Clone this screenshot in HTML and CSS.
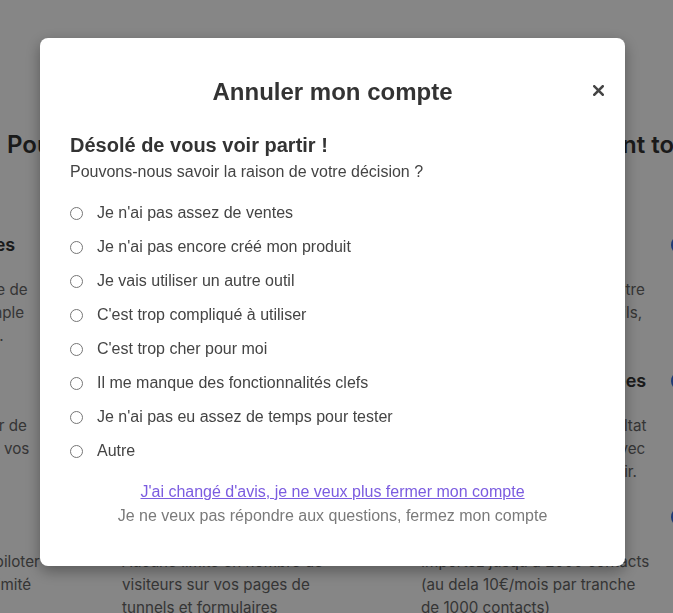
FILE: index.html
```html
<!DOCTYPE html>
<html lang="fr">
<head>
<meta charset="utf-8">
<title>Annuler mon compte</title>
<link rel="stylesheet" href="styles.css">
</head>
<body>
<div class="page">
  <h2 class="page-title">Pour démarrer sereinement, vous profitez gratuitement tout de suite de :</h2>
  <div class="features">
    <div class="feature"><span class="ficon"></span><div class="ftext"><h3>Gestion de vos ventes</h3><p>Créez les pages de vente de<br>capture de sorte très simple<br>rapide, sans aucun code.</p></div></div>
    <div class="feature"><span class="ficon"></span><div class="ftext"><h3>Formulaires</h3><p>Collectez des prospects avec des<br>formulaires personnalisés et<br>intégrez-les partout.</p></div></div>
    <div class="feature"><span class="ficon"></span><div class="ftext"><h3>Emails illimités</h3><p>Envoyez une newsletter à votre<br>sans limite d'envoi, vos emails,<br>et séquences</p></div></div>
    <div class="feature"><span class="ficon"></span><div class="ftext"><h3>Nom de domaine</h3><p>Connectez votre propre nom de<br>domaine à vos pages.</p></div></div>

    <div class="feature"><span class="ficon"></span><div class="ftext"><h3>Blog</h3><p>Un blog inclus pour créer de<br>articles, puis attirez ainsi vos<br>visiteurs</p></div></div>
    <div class="feature"><span class="ficon"></span><div class="ftext"><h3>Espace membre</h3><p>Hébergez vos formations en ligne<br>et vos contenus privés.</p></div></div>
    <div class="feature"><span class="ficon"></span><div class="ftext"><h3>Les statistiques détaillées</h3><p>Suivez chaque vente et résultat<br>des campagnes en direct, avec<br>des données claires pour agir.</p></div></div>
    <div class="feature"><span class="ficon"></span><div class="ftext"><h3>Support</h3><p>Une équipe disponible pour vous<br>accompagner.</p></div></div>

    <div class="feature"><span class="ficon"></span><div class="ftext"><h3>Tableau de bord</h3><p>Un espace unique pour piloter<br>vos activités en accès illimité<br>au quotidien</p></div></div>
    <div class="feature"><span class="ficon"></span><div class="ftext"><h3>Trafic illimité</h3><p>Aucune limite en nombre de<br>visiteurs sur vos pages de<br>tunnels et formulaires</p></div></div>
    <div class="feature"><span class="ficon"></span><div class="ftext"><h3>Contacts</h3><p>Importez jusqu'à 2000 contacts<br>(au dela 10€/mois par tranche<br>de 1000 contacts)</p></div></div>
    <div class="feature"><span class="ficon"></span><div class="ftext"><h3>Sans engagement</h3><p>Résiliez à tout moment.</p></div></div>
  </div>
</div>

<div class="overlay">
  <div class="modal" role="dialog" aria-labelledby="modal-title">
    <div class="modal-header">
      <span class="spacer"></span>
      <h1 id="modal-title" class="modal-title">Annuler mon compte</h1>
      <button class="close" type="button" aria-label="Fermer">
        <svg width="11" height="11" viewBox="0 0 11 11" aria-hidden="true"><path d="M1.3 1.3L9.7 9.7M9.7 1.3L1.3 9.7" stroke="#454545" stroke-width="2.6" stroke-linecap="square" fill="none"/></svg>
      </button>
    </div>
    <div class="modal-body">
      <h2 class="sorry">Désolé de vous voir partir !</h2>
      <p class="question">Pouvons-nous savoir la raison de votre décision ?</p>
      <ul class="reasons">
        <li><label class="reason"><input type="radio" name="reason"><span>Je n'ai pas assez de ventes</span></label></li>
        <li><label class="reason"><input type="radio" name="reason"><span>Je n'ai pas encore créé mon produit</span></label></li>
        <li><label class="reason"><input type="radio" name="reason"><span>Je vais utiliser un autre outil</span></label></li>
        <li><label class="reason"><input type="radio" name="reason"><span>C'est trop compliqué à utiliser</span></label></li>
        <li><label class="reason"><input type="radio" name="reason"><span>C'est trop cher pour moi</span></label></li>
        <li><label class="reason"><input type="radio" name="reason"><span>Il me manque des fonctionnalités clefs</span></label></li>
        <li><label class="reason"><input type="radio" name="reason"><span>Je n'ai pas eu assez de temps pour tester</span></label></li>
        <li><label class="reason"><input type="radio" name="reason"><span>Autre</span></label></li>
      </ul>
      <div class="actions">
        <a href="#" class="keep">J'ai changé d'avis, je ne veux plus fermer mon compte</a>
        <p class="skip">Je ne veux pas répondre aux questions, fermez mon compte</p>
      </div>
    </div>
  </div>
</div>
</body>
</html>
```

FILE: styles.css
```css
* { box-sizing: border-box; }

html, body {
  margin: 0;
  padding: 0;
  background: #ffffff;
  overflow: hidden;
}

body {
  font-family: "Inter", "Liberation Sans", sans-serif;
  color: #333;
  width: 673px;
  height: 613px;
}

/* background page */
.page {
  padding: 129px 0 0 7px;
  overflow: hidden;
  height: 613px;
}

.page-title {
  margin: 0 0 71px 0;
  font-size: 24px;
  line-height: 32px;
  font-weight: 600;
  color: #333;
  white-space: nowrap;
}

.features {
  display: grid;
  grid-template-columns: repeat(4, 289px);
  column-gap: 10px;
  row-gap: 21px;
  margin-left: -233px;
  width: 1186px;
}

.feature {
  display: flex;
  align-items: flex-start;
}

.ficon {
  flex: none;
  width: 20px;
  height: 20px;
  border-radius: 50%;
  background: #3a6fe0;
  margin: 3px 29px 0 0;
}

.ftext h3 {
  margin: 0 0 20px 0;
  font-size: 18px;
  line-height: 26px;
  font-weight: 600;
  color: #333;
  white-space: nowrap;
}

.ftext p {
  margin: 0;
  font-size: 15.2px;
  line-height: 23px;
  color: #666;
  white-space: nowrap;
  height: 69px;
}

/* overlay + modal */
.overlay {
  position: fixed;
  inset: 0;
  background: rgba(0, 0, 0, 0.475);
  display: flex;
  justify-content: center;
  align-items: flex-start;
  padding-top: 38px;
}

.modal {
  width: 585px;
  margin-left: -8px;
  background: #fff;
  border-radius: 8px;
  box-shadow: 0 5px 15px rgba(0, 0, 0, 0.35);
  font-family: "Liberation Sans", Arial, sans-serif;
}

.modal-header {
  display: grid;
  grid-template-columns: 1fr auto 1fr;
  align-items: center;
  padding: 40px 21px 0 21px;
}

.modal-title {
  margin: 0;
  font-size: 24px;
  line-height: 28px;
  font-weight: 700;
  color: #333;
}

.close {
  justify-self: end;
  display: flex;
  align-items: center;
  justify-content: center;
  width: 11px;
  height: 11px;
  padding: 0;
  margin-top: -4px;
  border: 0;
  background: none;
  cursor: pointer;
}

.close svg { display: block; }

.modal-body {
  padding: 27px 30px 38px 30px;
}

.sorry {
  margin: 0;
  font-size: 20px;
  line-height: 24px;
  font-weight: 700;
  color: #333;
}

.question {
  margin: 5px 0 0 0;
  font-size: 16px;
  line-height: 20px;
  color: #444;
}

.reasons {
  list-style: none;
  margin: 14px 0 0 0;
  padding: 0;
}

.reason {
  display: flex;
  align-items: center;
  height: 34px;
  font-size: 16px;
  line-height: 20px;
  color: #444;
  cursor: pointer;
}

.reason input {
  appearance: none;
  -webkit-appearance: none;
  flex: none;
  width: 13px;
  height: 13px;
  margin: 0 14px 0 0;
  border: 1px solid #767676;
  border-radius: 50%;
  background: #fff;
}

.actions {
  margin-top: 12px;
  text-align: center;
  font-size: 16px;
  line-height: 24px;
}

.keep {
  color: #7b5ce0;
  text-decoration: underline;
}

.skip {
  margin: 0;
  color: #7a7a7a;
}
```
